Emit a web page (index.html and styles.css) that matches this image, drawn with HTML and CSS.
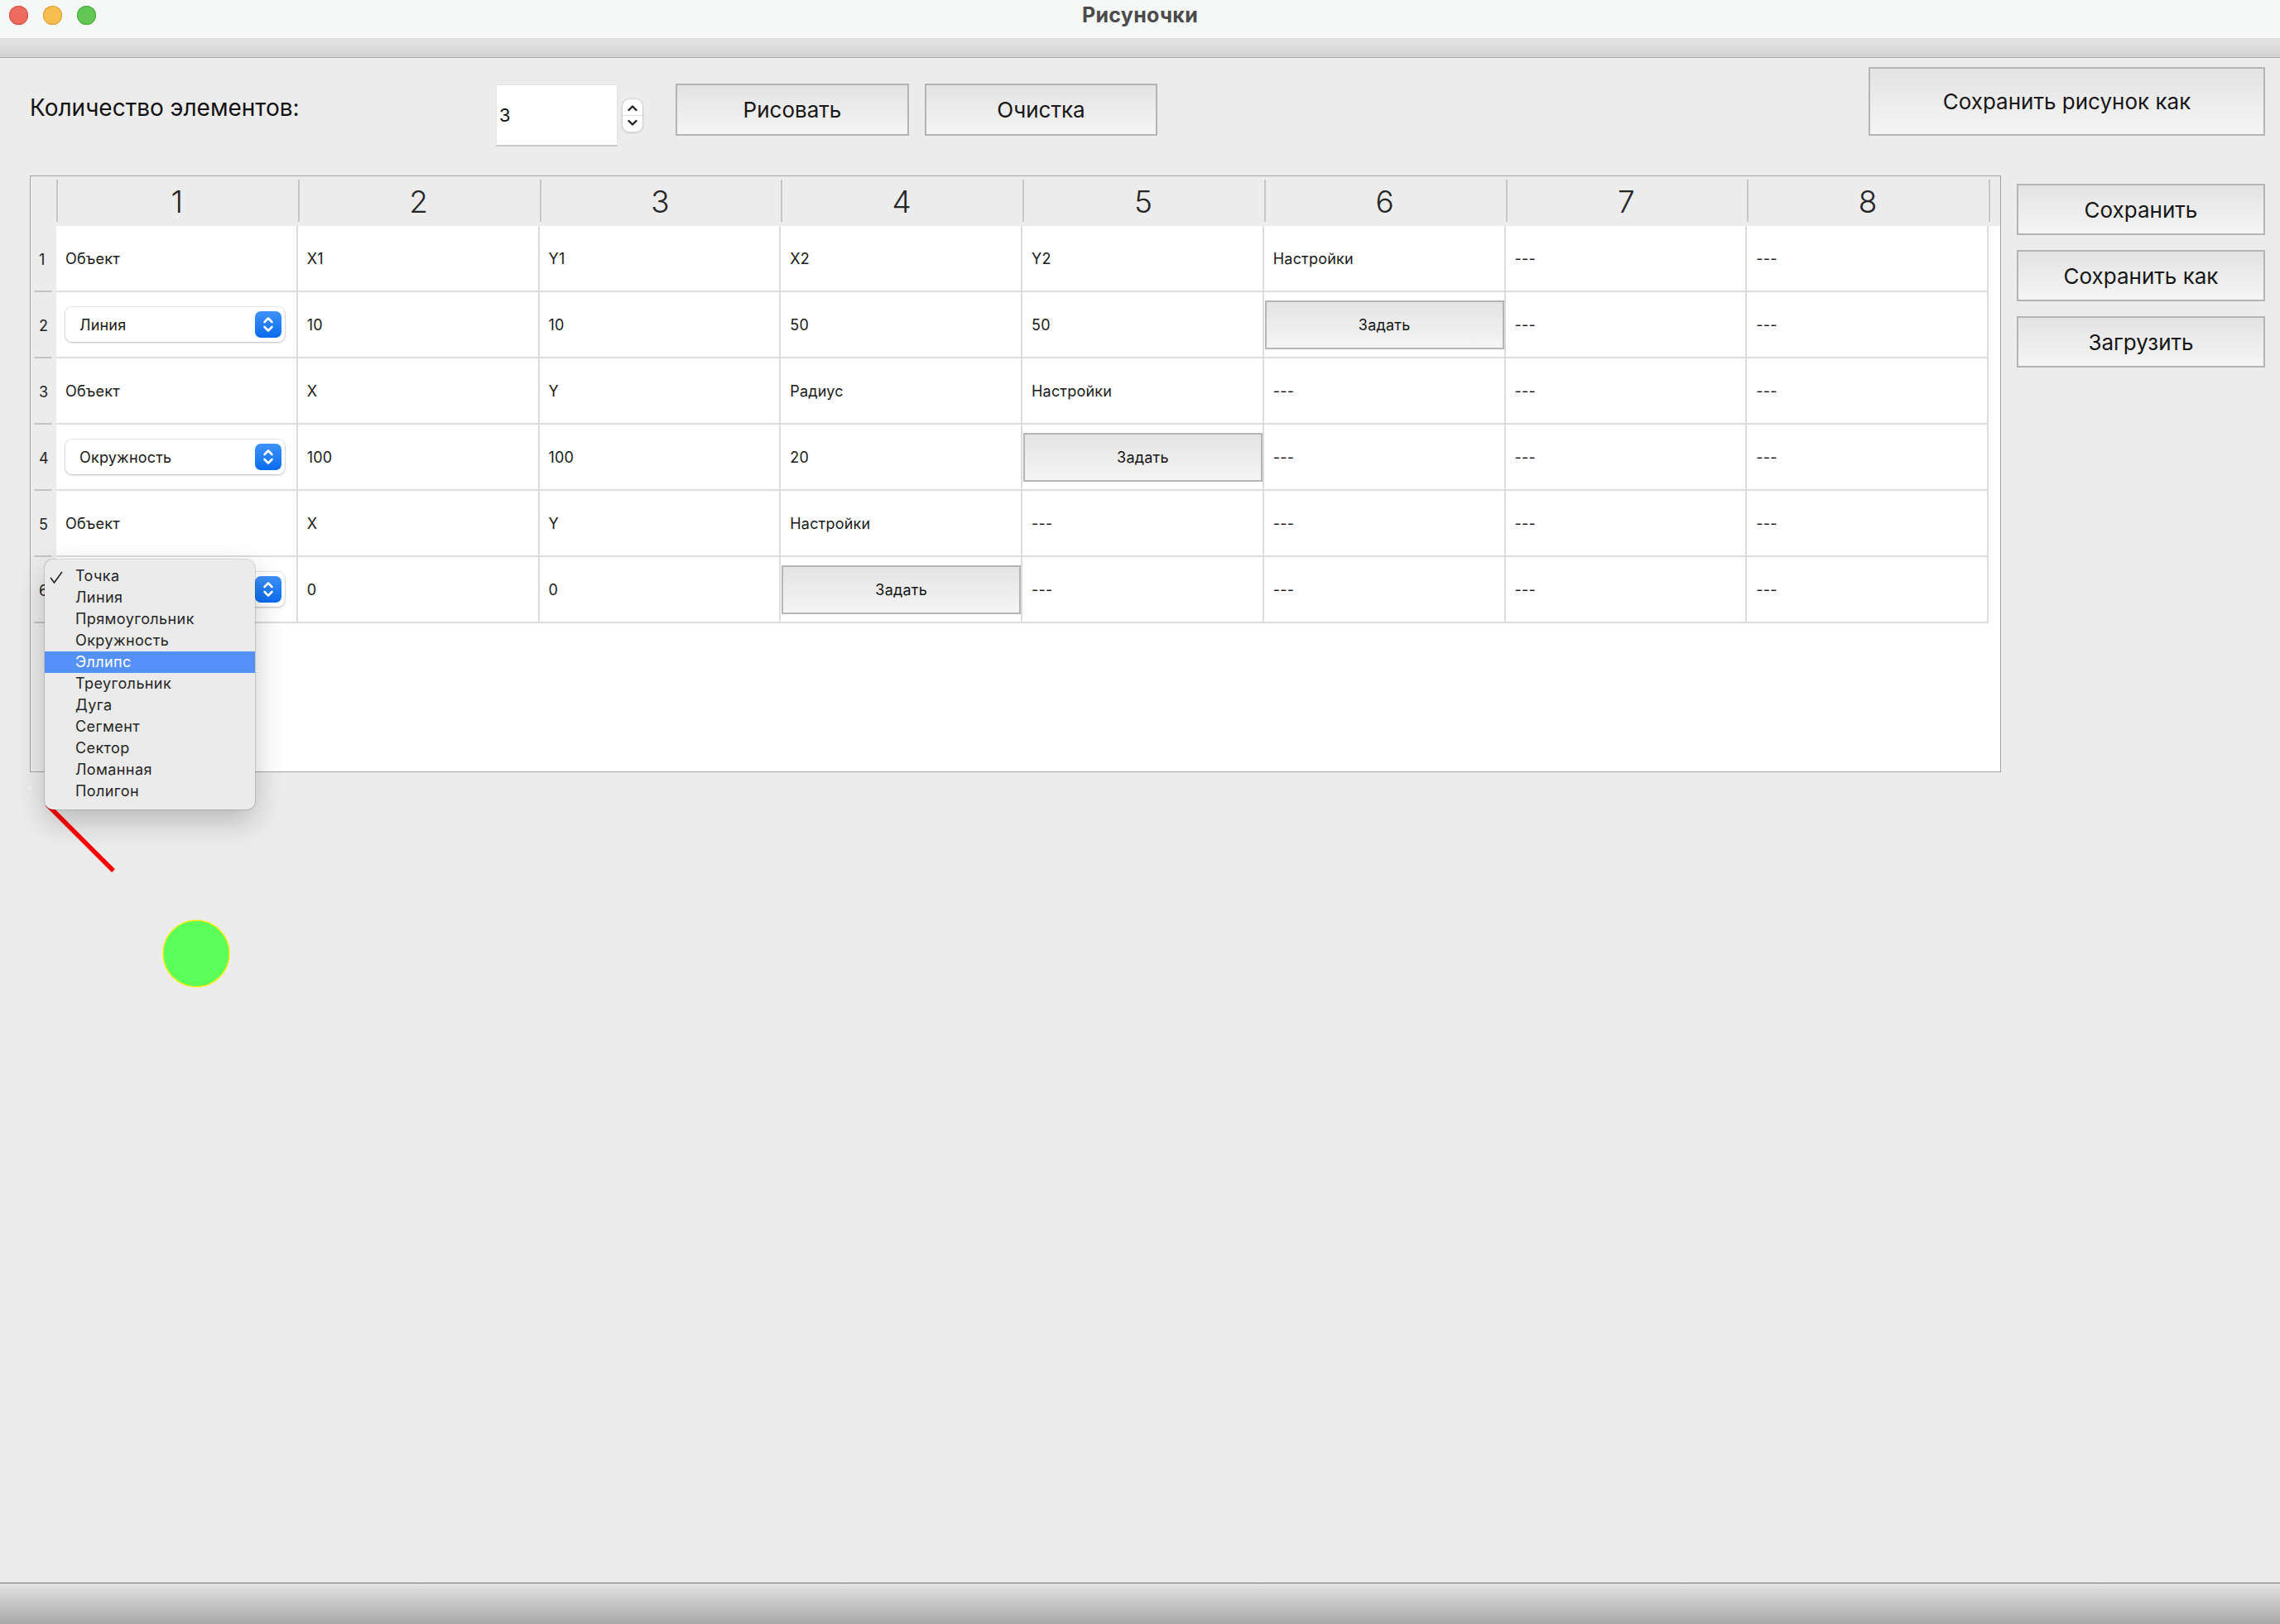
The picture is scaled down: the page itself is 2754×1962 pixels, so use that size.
FILE: index.html
```html
<!DOCTYPE html>
<html lang="ru">
<head>
<meta charset="utf-8">
<title>Рисуночки</title>
<link rel="stylesheet" href="styles.css">
</head>
<body>
<header class="titlebar">
  <div class="lights">
    <span class="light red"></span>
    <span class="light yellow"></span>
    <span class="light green"></span>
  </div>
  <div class="title">Рисуночки</div>
  <div></div>
</header>
<div class="band"></div>
<main class="main">
  <div class="topbar">
    <div class="count-label">Количество элементов:</div>
    <div class="spin">3</div>
    <div class="stepper">
      <svg width="26" height="41" viewBox="0 0 26 41">
        <rect x="0.5" y="0.5" width="25" height="40" rx="9" fill="#fff" stroke="#d2d2d2"/>
        <line x1="1" y1="20.5" x2="25" y2="20.5" stroke="#dedede" stroke-width="1"/>
        <path d="M8.5 14 L13 9.5 L17.5 14" fill="none" stroke="#222" stroke-width="2.4" stroke-linecap="round" stroke-linejoin="round"/>
        <path d="M8.5 27 L13 31.5 L17.5 27" fill="none" stroke="#222" stroke-width="2.4" stroke-linecap="round" stroke-linejoin="round"/>
      </svg>
    </div>
    <div class="btn btn-draw">Рисовать</div>
    <div class="btn btn-clear">Очистка</div>
    <div class="btn btn-saveimg">Сохранить рисунок как</div>
  </div>

  <div class="workarea">
    <div class="table">
      <div class="corner"></div>
      <div class="hc">1</div><div class="hc">2</div><div class="hc">3</div><div class="hc">4</div>
      <div class="hc">5</div><div class="hc">6</div><div class="hc">7</div><div class="hc">8</div>
      <div class="hc hfill"></div>

      <div class="rh">1</div>
      <div class="c">Объект</div><div class="c">X1</div><div class="c">Y1</div><div class="c">X2</div>
      <div class="c">Y2</div><div class="c">Настройки</div><div class="c">---</div><div class="c">---</div>
      <div class="fill"></div>

      <div class="rh">2</div>
      <div class="c"><div class="combo"><span>Линия</span><i class="carrow"><svg width="32" height="32" viewBox="0 0 32 32"><path d="M11.5 13 L16 8.5 L20.5 13 M11.5 19 L16 23.5 L20.5 19" fill="none" stroke="#fff" stroke-width="2.6" stroke-linecap="round" stroke-linejoin="round"/></svg></i></div></div>
      <div class="c">10</div><div class="c">10</div><div class="c">50</div><div class="c">50</div>
      <div class="c bc"><div class="cellbtn">Задать</div></div>
      <div class="c">---</div><div class="c">---</div>
      <div class="fill"></div>

      <div class="rh">3</div>
      <div class="c">Объект</div><div class="c">X</div><div class="c">Y</div><div class="c">Радиус</div>
      <div class="c">Настройки</div><div class="c">---</div><div class="c">---</div><div class="c">---</div>
      <div class="fill"></div>

      <div class="rh">4</div>
      <div class="c"><div class="combo"><span>Окружность</span><i class="carrow"><svg width="32" height="32" viewBox="0 0 32 32"><path d="M11.5 13 L16 8.5 L20.5 13 M11.5 19 L16 23.5 L20.5 19" fill="none" stroke="#fff" stroke-width="2.6" stroke-linecap="round" stroke-linejoin="round"/></svg></i></div></div>
      <div class="c">100</div><div class="c">100</div><div class="c">20</div>
      <div class="c bc"><div class="cellbtn">Задать</div></div>
      <div class="c">---</div><div class="c">---</div><div class="c">---</div>
      <div class="fill"></div>

      <div class="rh">5</div>
      <div class="c">Объект</div><div class="c">X</div><div class="c">Y</div><div class="c">Настройки</div>
      <div class="c">---</div><div class="c">---</div><div class="c">---</div><div class="c">---</div>
      <div class="fill"></div>

      <div class="rh">6</div>
      <div class="c"><div class="combo"><span class="covered">Точка</span><i class="carrow"><svg width="32" height="32" viewBox="0 0 32 32"><path d="M11.5 13 L16 8.5 L20.5 13 M11.5 19 L16 23.5 L20.5 19" fill="none" stroke="#fff" stroke-width="2.6" stroke-linecap="round" stroke-linejoin="round"/></svg></i></div></div>
      <div class="c">0</div><div class="c">0</div>
      <div class="c bc"><div class="cellbtn">Задать</div></div>
      <div class="c">---</div><div class="c">---</div><div class="c">---</div><div class="c">---</div>
      <div class="fill"></div>

      <div class="rh rh-empty"></div>
      <div class="empty"></div>
    </div>

    <div class="side">
      <div class="btn">Сохранить</div>
      <div class="btn">Сохранить как</div>
      <div class="btn">Загрузить</div>
    </div>
  </div>

  <svg class="canvas" viewBox="0 0 2754 979" preserveAspectRatio="xMinYMin meet">
    <rect x="36" y="18" width="2" height="2" fill="#ffffff"/>
    <line x1="57" y1="39" x2="137" y2="119" stroke="#ff0000" stroke-width="5.5"/>
    <circle cx="237" cy="219" r="40" fill="#5aff5a" stroke="#f2ee00" stroke-width="1.5"/>
  </svg>
</main>
<footer class="bottombar"></footer>

<div class="popup">
  <div class="item"><svg class="check" width="16" height="16" viewBox="0 0 16 16"><path d="M1.5 8.5 L5.5 14 L14.5 1.5" fill="none" stroke="#2a2a2a" stroke-width="1.7" stroke-linecap="round" stroke-linejoin="round"/></svg>Точка</div>
  <div class="item">Линия</div>
  <div class="item">Прямоугольник</div>
  <div class="item">Окружность</div>
  <div class="item sel">Эллипс</div>
  <div class="item">Треугольник</div>
  <div class="item">Дуга</div>
  <div class="item">Сегмент</div>
  <div class="item">Сектор</div>
  <div class="item">Ломанная</div>
  <div class="item">Полигон</div>
</div>
</body>
</html>
```
FILE: styles.css
```css
* { box-sizing: border-box; }
html, body { margin: 0; padding: 0; }
body {
  width: 2754px;
  height: 1962px;
  background: #ececec;
  font-family: Inter, "Noto Sans", "Liberation Sans", sans-serif;
  color: #1c1c1c;
  display: flex;
  flex-direction: column;
  position: relative;
  overflow: hidden;
}

/* Title bar */
.titlebar {
  height: 47px;
  background: #f6f7f7;
  border-bottom: 1px solid #dedede;
  display: grid;
  grid-template-columns: 1fr auto 1fr;
  align-items: start;
}
.lights { display: flex; gap: 18px; padding-left: 11px; padding-top: 7px; }
.light { width: 23px; height: 23px; border-radius: 50%; display: block; }
.red { background: #ee6b60; box-shadow: inset 0 0 0 1px #d8554b; }
.yellow { background: #f6be4f; box-shadow: inset 0 0 0 1px #dca33a; }
.green { background: #62c655; box-shadow: inset 0 0 0 1px #4fae42; }
.title {
  font-size: 25px;
  font-weight: 700;
  color: #4b4b4b;
  line-height: 28px;
  padding-top: 4px;
  letter-spacing: 0.3px;
}
.band {
  height: 23px;
  background: linear-gradient(#e3e3e3, #d2d2d2);
  border-bottom: 1px solid #ababab;
}

/* Main */
.main {
  flex: 1;
  min-height: 0;
  display: flex;
  flex-direction: column;
  padding-top: 11px;
}
.topbar {
  display: flex;
  align-items: flex-start;
  height: 96px;
  padding-left: 36px;
  padding-right: 18px;
}
.count-label {
  width: 563px;
  margin-top: 31px;
  font-size: 28px;
  line-height: 36px;
  color: #111;
}
.spin {
  width: 147px;
  height: 75px;
  margin-top: 21px;
  background: #fff;
  border: 1px solid #e4e4e4;
  border-bottom: 2px solid #c8c8c8;
  font-size: 22px;
  padding-left: 3px;
  display: flex;
  align-items: center;
  color: #111;
}
.stepper { width: 26px; height: 41px; margin-left: 5px; margin-top: 38px; }
.stepper svg { display: block; filter: drop-shadow(0 1px 1px rgba(0,0,0,0.12)); }

.btn {
  height: 63px;
  border: 2px solid #b4b4b4;
  background: linear-gradient(#e3e3e3, #f5f5f5);
  font-size: 26px;
  display: flex;
  align-items: center;
  justify-content: center;
  color: #161616;
}
.btn-draw { width: 282px; margin-left: 39px; margin-top: 20px; }
.btn-clear { width: 281px; margin-left: 19px; margin-top: 20px; }
.btn-saveimg { width: 479px; height: 83px; margin-left: auto; }

/* Work area */
.workarea {
  display: flex;
  padding-left: 36px;
  margin-top: 35px;
}
.table {
  width: 2381px;
  height: 721px;
  border: 1px solid #a3a3a3;
  background: #fff;
  display: grid;
  grid-template-columns: 31px repeat(8, 291.75px) 1fr;
  grid-template-rows: 60px repeat(6, 80px) 1fr;
}
.corner { background: #ececec; }
.hc {
  background: linear-gradient(#c6c6c6, #c6c6c6) no-repeat 0 4px / 2px 51px, #ececec;
  font-size: 37px;
  font-weight: 300;
  color: #262626;
  display: flex;
  align-items: center;
  justify-content: center;
}
.rh {
  background: linear-gradient(#c4c4c4, #c4c4c4) no-repeat 4px 100% / 22px 2px, #ececec;
  font-size: 18px;
  display: flex;
  align-items: center;
  padding-left: 10px;
  color: #222;
}
.rh-empty { background: #ececec; }
.c {
  border-right: 2px solid #dcdcdc;
  border-bottom: 2px solid #dcdcdc;
  padding-left: 11px;
  display: flex;
  align-items: center;
  font-size: 18px;
  color: #1a1a1a;
  letter-spacing: 0.2px;
}
.c.bc { padding-left: 1px; }
.fill { background: #fff; }
.empty { grid-column: 2 / -1; background: #fff; }

.cellbtn {
  width: 100%;
  height: 59px;
  border: 2px solid #b5b5b5;
  background: linear-gradient(#e4e4e4, #f5f5f5);
  display: flex;
  align-items: center;
  justify-content: center;
  font-size: 18px;
  color: #161616;
}

.combo {
  width: 265px;
  height: 42px;
  background: #fff;
  border-radius: 8px;
  box-shadow: 0 0 0 1px rgba(0,0,0,0.08), 0 1px 3px rgba(0,0,0,0.2);
  display: flex;
  align-items: center;
  padding-left: 17px;
  padding-right: 4px;
  font-size: 18px;
  color: #1a1a1a;
}
.combo span { flex: 1; }
.combo .covered { visibility: hidden; }
.carrow {
  width: 32px;
  height: 32px;
  border-radius: 7px;
  background: linear-gradient(#3f91f8, #0b6cf0);
  display: block;
}
.carrow svg { display: block; }

.side {
  margin-left: 19px;
  width: 300px;
  padding-top: 10px;
  display: flex;
  flex-direction: column;
  gap: 18px;
}
.side .btn { height: 62px; }

.canvas {
  display: block;
  width: 2754px;
  flex: 1;
  min-height: 0;
}

.bottombar {
  height: 50px;
  border-top: 1px solid #6f6f6f;
  background: linear-gradient(#e3e3e3, #a8a8a8);
}

/* Popup menu */
.popup {
  position: absolute;
  left: 54px;
  top: 676px;
  width: 254px;
  height: 302px;
  background: #ebebeb;
  border-radius: 10px;
  box-shadow: 0 0 0 1px rgba(0,0,0,0.13), 0 14px 36px rgba(0,0,0,0.22);
  padding-top: 7px;
}
.item {
  height: 26px;
  line-height: 26px;
  padding-left: 37px;
  font-size: 18px;
  color: #262626;
  letter-spacing: 0.4px;
  position: relative;
}
.item.sel { background: #5591fb; color: #fff; }
.check { position: absolute; left: 6px; top: 7px; }
```
